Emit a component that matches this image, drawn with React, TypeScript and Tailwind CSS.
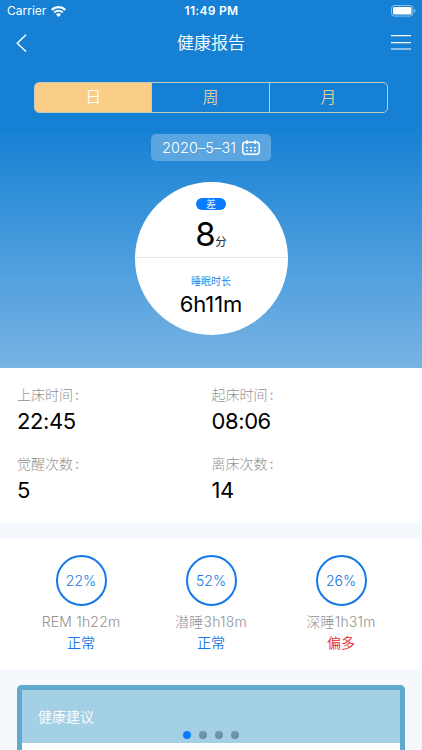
type Stat = { label: string; value: string };
type Phase = { percent: string; name: string; status: string; color: string };

const stats: Stat[] = [
  { label: '上床时间', value: '22:45' },
  { label: '起床时间', value: '08:06' },
  { label: '觉醒次数', value: '5' },
  { label: '离床次数', value: '14' },
];

const phases: Phase[] = [
  { percent: '22%', name: 'REM 1h22m', status: '正常', color: 'text-[#1478e8]' },
  { percent: '52%', name: '潜睡3h18m', status: '正常', color: 'text-[#1478e8]' },
  { percent: '26%', name: '深睡1h31m', status: '偏多', color: 'text-[#ec1c24]' },
];

function WifiIcon() {
  return (
    <svg className="h-[11px] w-[15px]" viewBox="0 0 15 11" fill="none" stroke="white">
      <path d="M.8 3.9a9.6 9.6 0 0 1 13.4 0" strokeWidth="2.3" />
      <path d="M3.2 6.5a6.2 6.2 0 0 1 8.6 0" strokeWidth="2" />
      <path d="M7.5 11 5 8.4a3.6 3.6 0 0 1 5 0Z" fill="white" stroke="none" />
    </svg>
  );
}

function BatteryIcon() {
  return (
    <svg className="h-[12px] w-[25px]" viewBox="0 0 25 12" fill="none">
      <rect x=".5" y=".5" width="21.5" height="10.6" rx="3" stroke="white" strokeOpacity=".5" />
      <rect x="2" y="2" width="18.5" height="7.6" rx="1.6" fill="white" />
      <path d="M23.3 4v3.8c.8-.3 1.2-1 1.2-1.9s-.4-1.6-1.2-1.9Z" fill="white" fillOpacity=".5" />
    </svg>
  );
}

function CalendarIcon() {
  return (
    <svg className="h-[15px] w-[18px]" viewBox="0 0 18 15" fill="none" stroke="white">
      <rect x=".75" y="2.2" width="16.5" height="12" rx="2.6" strokeWidth="1.5" />
      <path d="M4.9 .3v3.6M13.1 .3v3.6" strokeWidth="1.6" />
      <path d="M4 7.6h2M8 7.6h2M12 7.6h2M4 10.7h2M8 10.7h2M12 10.7h2" strokeWidth="1.4" />
    </svg>
  );
}

export default function App() {
  return (
    <div className="flex h-[750px] w-[422px] flex-col overflow-hidden bg-[#f5f9fd] font-['Inter','Noto_Sans_CJK_SC',sans-serif]">
      <header className="flex h-[368px] shrink-0 flex-col items-center bg-[linear-gradient(#1681d4_0%,#1681d4_35%,#78b4e4_100%)] text-white">
        <div className="grid h-[22px] w-full grid-cols-3 items-center pr-[6px] pl-[7px]">
          <div className="flex items-center gap-[5px] text-[12px] leading-[22px]">
            Carrier
            <WifiIcon />
          </div>
          <div className="text-center text-[12px] leading-[22px] font-semibold tracking-[0.3px]">11:49 PM</div>
          <div className="flex justify-end">
            <BatteryIcon />
          </div>
        </div>

        <nav className="grid h-[42px] w-full grid-cols-3 items-center pr-[11px] pl-[11px]">
          <svg className="ml-[5px] h-[18px] w-[25px]" viewBox="0 0 25 18" fill="none" stroke="white" strokeWidth="1.4">
            <path d="M10 .8 1.2 9.2 10 17.6" />
          </svg>
          <h1 className="text-center text-[17px] leading-[24px] font-[350]">健康报告</h1>
          <svg className="h-[16px] w-[20px] justify-self-end" viewBox="0 0 20 16" stroke="white" strokeWidth="1.2">
            <path d="M0 .6h20M0 7.6h20M0 14h20" />
          </svg>
        </nav>

        <div className="mt-[18px] grid h-[31px] w-[354px] grid-cols-3 divide-x divide-[#c3cbb9] overflow-hidden rounded-[5px] border border-[#c3cbb9] text-center text-[16px] leading-[29px] font-[350] text-[#e0cb9c]">
          <div className="bg-[#fbce88] text-white">日</div>
          <div>周</div>
          <div>月</div>
        </div>

        <div className="mt-[21px] flex h-[27px] w-[120px] items-center justify-center gap-[6px] rounded-[5px] bg-[#5ba5e0]">
          <span className="text-[14.5px] leading-[27px] font-[350] tracking-[0.1px] whitespace-nowrap">2020–5–31</span>
          <CalendarIcon />
        </div>

        <div className="mt-[21px] flex size-[153px] flex-col items-center overflow-hidden rounded-full bg-white">
          <div className="flex h-[76px] w-full flex-col items-center border-b border-[#e4e8ec]">
            <div className="mt-[16px] h-[12px] w-[30px] rounded-full bg-[#087bff] text-center text-[10px] leading-[12px] font-[350]">差</div>
            <div className="mt-[4px] flex items-baseline leading-[40px] text-black">
              <span className="text-[33px] tracking-[-0.5px]">8</span>
              <span className="text-[11.5px] font-[350]">分</span>
            </div>
          </div>
          <div className="mt-[15px] text-[10px] leading-[16px] font-[350] text-[#1478e8]">睡眠时长</div>
          <div className="mt-[1px] text-[22px] leading-[28px] tracking-[-0.1px] text-black">6h11m</div>
        </div>
      </header>

      <section className="grid h-[155px] shrink-0 grid-cols-2 content-start bg-white pt-[16px] pl-[17px]">
        {stats.map((s) => (
          <div key={s.label} className="h-[69px] even:-ml-[8px]">
            <div className="text-[14px] leading-[22px] font-light text-[#929292]">
              {s.label}<span className="ml-[2px] font-normal">:</span>
            </div>
            <div className="text-[22px] leading-[31px] tracking-[-0.4px] text-black">{s.value}</div>
          </div>
        ))}
      </section>

      <section className="mt-[16px] grid h-[130px] shrink-0 grid-cols-3 bg-white px-[16px] pt-[16px]">
        {phases.map((p) => (
          <div key={p.name} className="flex flex-col items-center">
            <div className="flex size-[51px] items-center justify-center rounded-full border-2 border-[#1478e8] text-[14px] font-[350] text-[#1478e8]">
              {p.percent}
            </div>
            <div className="mt-[6px] text-[14px] leading-[20px] font-light tracking-[0.2px] whitespace-nowrap text-[#929292]">{p.name}</div>
            <div className={`text-[14px] leading-[21px] font-[350] ${p.color}`}>{p.status}</div>
          </div>
        ))}
      </section>

      <section className="relative mx-[17px] mt-[16px] h-[90px] shrink-0 rounded-t-[5px] border-x-[5px] border-t-[5px] border-[#60abcd] bg-white">
        <div className="h-[53px] bg-[#a4d0e5] pl-[16px] text-[14px] leading-[53px] font-[350] text-white">健康建议</div>
        <div className="absolute top-[41px] left-1/2 flex -translate-x-1/2 gap-[8px]">
          <span className="size-[8px] rounded-full bg-[#087bff]" />
          <span className="size-[8px] rounded-full bg-[#6e93a3]" />
          <span className="size-[8px] rounded-full bg-[#6e93a3]" />
          <span className="size-[8px] rounded-full bg-[#6e93a3]" />
        </div>
      </section>
    </div>
  );
}
